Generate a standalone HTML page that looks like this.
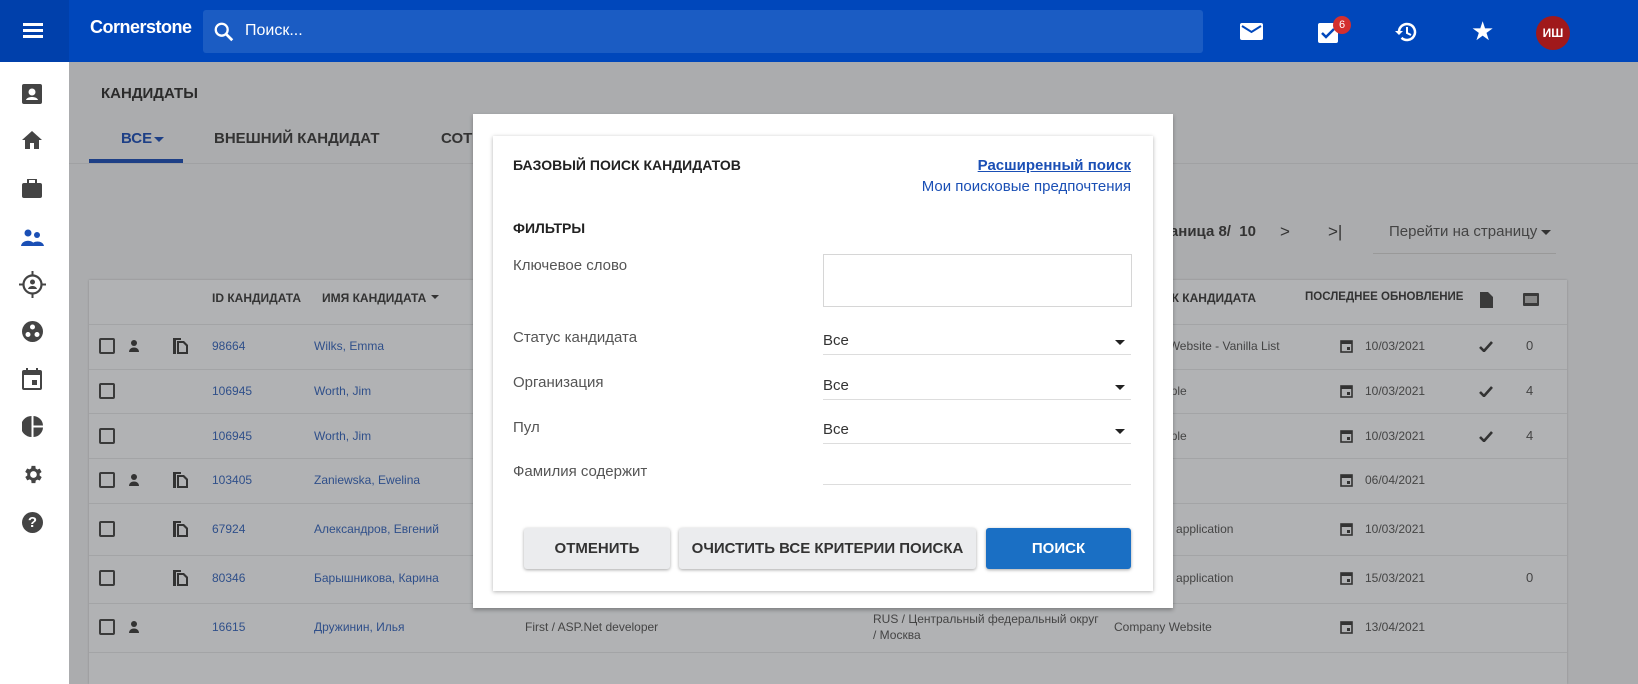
<!DOCTYPE html>
<html><head><meta charset="utf-8"><style>
*{margin:0;padding:0;box-sizing:border-box}
body{width:1638px;height:684px;overflow:hidden;position:relative;font-family:"Liberation Sans",sans-serif;background:#abacae;color:#333}
.a{position:absolute}
.hdr{left:0;top:0;width:1638px;height:62px;background:#0047bb}
.side{left:0;top:62px;width:69px;height:622px;background:#fff}
.t{position:absolute;white-space:nowrap}
.lk{color:#2f4f8a}
.row{position:absolute;left:89px;width:1478px;border-top:1px solid #a3a4a6}
.cb{position:absolute;left:99px;width:16px;height:16px;border:2px solid #3a3a3a;border-radius:2px}
.f13{font-size:12px}
.lbl{font-size:15px;color:#555}
.sel{position:absolute;left:823px;width:308px;border-bottom:1px solid #ddd;height:26px;font-size:15px;color:#333}
.sel:after{content:"";position:absolute;right:6px;top:11px;border:5px solid transparent;border-top:5px solid #222}
.btn{position:absolute;top:528px;height:41px;border-radius:3px;font-size:15px;font-weight:bold;text-align:center;line-height:41px;box-shadow:0 1px 3px rgba(0,0,0,.35)}
</style></head><body>
<div class="a hdr"></div>
<div class="a" style="left:0;top:0;width:69px;height:62px;background:#0040ab"></div>
<div class="a" style="left:23px;top:23px;width:20px;height:3px;background:#fff;box-shadow:0 6px 0 #fff,0 12px 0 #fff"></div>
<div class="t" style="left:90px;top:17px;color:#fff;font-weight:bold;font-size:18px;letter-spacing:-0.5px">Cornerstone</div>
<div class="a" style="left:203px;top:10px;width:1000px;height:43px;background:#1b5cc3;border-radius:3px"></div>
<svg class="a" style="left:213px;top:21px" width="22" height="22" viewBox="0 0 24 24"><circle cx="9.5" cy="9.5" r="6.5" fill="none" stroke="#fff" stroke-width="2.5"/><path d="M14 14l7 7" stroke="#fff" stroke-width="3"/></svg>
<div class="t" style="left:245px;top:22px;color:#fff;font-size:16px">Поиск...</div>
<svg class="a" style="left:1240px;top:23px" width="23" height="17" viewBox="0 0 23 17"><rect width="23" height="17" rx="2" fill="#fff"/><path d="M2 3l9.5 6L21 3" stroke="#0047bb" stroke-width="2" fill="none"/></svg>
<svg class="a" style="left:1318px;top:20px" width="22" height="23" viewBox="0 0 22 23"><rect y="3" width="20" height="20" rx="2" fill="#fff"/><path d="M4 13l4 4 8-8" stroke="#0047bb" stroke-width="2.5" fill="none"/></svg>
<div class="a" style="left:1333px;top:16px;width:18px;height:18px;border-radius:50%;background:#d32f2f;color:#fff;font-size:11px;text-align:center;line-height:18px">6</div>
<svg class="a" style="left:1394px;top:21px" width="24" height="22" viewBox="0 0 24 22"><path d="M5 11a8 8 0 1 1 2.5 5.8" stroke="#fff" stroke-width="2.5" fill="none"/><path d="M1 10l4 4 4-4z" fill="#fff"/><path d="M13 6v6l4 2" stroke="#fff" stroke-width="2" fill="none"/></svg>
<div class="t" style="left:1471px;top:16px;color:#fff;font-size:26px">★</div>
<div class="a" style="left:1536px;top:16px;width:34px;height:34px;border-radius:50%;background:#a0191b;color:#fff;font-size:12px;font-weight:bold;text-align:center;line-height:34px">ИШ</div>
<div class="a side"></div>
<svg class="a" style="left:22px;top:84px" width="20" height="20"><rect width="20" height="20" rx="2" fill="#444"/><circle cx="10" cy="8" r="3.5" fill="#fff"/><path d="M4 16c1-4 11-4 12 0z" fill="#fff"/></svg>
<svg class="a" style="left:22px;top:131px" width="20" height="18"><path d="M10 0L0 9h3v9h5v-6h4v6h5V9h3z" fill="#444"/></svg>
<svg class="a" style="left:22px;top:179px" width="20" height="19"><rect y="4" width="20" height="15" rx="2" fill="#444"/><rect x="6" y="0" width="8" height="6" rx="1" fill="none" stroke="#444" stroke-width="2"/></svg>
<svg class="a" style="left:21px;top:229px" width="23" height="17"><circle cx="7" cy="4" r="3.5" fill="#1a4fb5"/><circle cx="16" cy="6" r="3" fill="#1a4fb5"/><path d="M0 17c1-7 13-7 14 0z M10 17c1-6 12-6 13 0z" fill="#1a4fb5"/></svg>
<svg class="a" style="left:19px;top:271px" width="27" height="27"><circle cx="13.5" cy="13.5" r="9" fill="none" stroke="#444" stroke-width="2.2"/><path d="M13.5 0v5M13.5 22v5M0 13.5h5M22 13.5h5" stroke="#444" stroke-width="2"/><circle cx="13.5" cy="11" r="2.5" fill="#444"/><path d="M9 18c1-4 8-4 9 0z" fill="#444"/></svg>
<svg class="a" style="left:22px;top:321px" width="21" height="21"><circle cx="10.5" cy="10.5" r="10.5" fill="#444"/><circle cx="10.5" cy="6" r="2.5" fill="#fff"/><circle cx="6" cy="13.5" r="2.5" fill="#fff"/><circle cx="15" cy="13.5" r="2.5" fill="#fff"/></svg>
<svg class="a" style="left:22px;top:368px" width="20" height="22"><rect x="1" y="3" width="18" height="18" rx="1" fill="none" stroke="#444" stroke-width="2"/><rect x="1" y="3" width="18" height="4" fill="#444"/><path d="M5 0v4M15 0v4" stroke="#444" stroke-width="2"/><rect x="10" y="12" width="5" height="5" fill="#444"/></svg>
<svg class="a" style="left:22px;top:416px" width="21" height="21"><path d="M9.5 0v21A10.5 10.5 0 0 1 9.5 0z M11.5 0A10 10 0 0 1 21 9.5h-9.5z M11.5 11.5H21A10 10 0 0 1 11.5 21z" fill="#444"/></svg>
<svg class="a" style="left:21px;top:463px" width="23" height="23" viewBox="0 0 24 24"><path fill="#444" d="M19.4 13a7.5 7.5 0 0 0 0-2l2.1-1.6-2-3.5-2.5 1a7 7 0 0 0-1.7-1L15 3h-4l-.4 2.7a7 7 0 0 0-1.7 1l-2.5-1-2 3.5L6.6 11a7.5 7.5 0 0 0 0 2l-2.1 1.6 2 3.5 2.5-1a7 7 0 0 0 1.700 1L11 21h4l.4-2.7a7 7 0 0 0 1.7-1l2.5 1 2-3.5zM13 15.5a3.5 3.5 0 1 1 0-7 3.5 3.5 0 0 1 0 7z"/></svg>
<div class="a" style="left:22px;top:512px;width:21px;height:21px;border-radius:50%;background:#444;color:#fff;font-weight:bold;font-size:15px;text-align:center;line-height:21px">?</div>
<div class="t" style="left:101px;top:85px;font-size:15px;font-weight:bold;color:#2b2b2b">КАНДИДАТЫ</div>
<div class="t" style="left:121px;top:130px;font-size:15px;font-weight:bold;color:#1d3f86">ВСЕ</div>
<div class="a" style="left:154px;top:137px;border:5px solid transparent;border-top:5px solid #1d3f86"></div>
<div class="a" style="left:89px;top:159px;width:94px;height:4px;background:#1d3f86"></div>
<div class="t" style="left:214px;top:130px;font-size:15px;font-weight:bold;color:#333">ВНЕШНИЙ КАНДИДАТ</div>
<div class="t" style="left:441px;top:130px;font-size:15px;font-weight:bold;color:#333">СОТРУДНИК</div>
<div class="a" style="left:69px;top:163px;width:1569px;height:1px;background:#a0a1a3"></div>
<div class="t" style="right:382px;top:223px;font-size:15px;font-weight:bold;color:#333">Страница 8/&nbsp; 10</div>
<div class="t" style="left:1280px;top:222px;font-size:17px;color:#333">&gt;</div>
<div class="t" style="left:1328px;top:222px;font-size:17px;color:#333">&gt;|</div>
<div class="t" style="left:1389px;top:223px;font-size:15px;color:#444">Перейти на страницу</div>
<div class="a" style="left:1541px;top:230px;border:5px solid transparent;border-top:5px solid #333"></div>
<div class="a" style="left:1373px;top:253px;width:183px;height:1px;background:#999"></div>
<div class="a" style="left:89px;top:280px;width:1478px;height:404px;background:#b1b2b4;box-shadow:0 0 2px rgba(0,0,0,.2)"></div>
<div class="t f13" style="left:212px;top:291px;font-weight:bold;color:#333">ID КАНДИДАТА</div>
<div class="t f13" style="left:322px;top:291px;font-weight:bold;color:#333">ИМЯ КАНДИДАТА</div>
<div class="a" style="left:431px;top:295px;border:4px solid transparent;border-top:4px solid #333"></div>
<div class="t f13" style="right:382px;top:291px;font-weight:bold;color:#333">ИСТОЧНИК КАНДИДАТА</div>
<div class="t f13" style="left:1305px;top:291px;font-weight:bold;color:#333;font-size:11.5px">ПОСЛЕДНЕЕ ОБНОВЛЕНИЕ</div>
<svg class="a" style="left:1480px;top:292px" width="13" height="16"><path d="M0 0h8l5 5v11H0z" fill="#3a3a3a"/></svg>
<svg class="a" style="left:1523px;top:293px" width="16" height="13"><rect width="16" height="13" rx="1" fill="#3a3a3a"/><rect x="2" y="3" width="12" height="7" fill="#888"/></svg>
<div class="row" style="top:324px;height:45px"></div>
<div class="row" style="top:369px"></div>
<div class="row" style="top:413px"></div>
<div class="row" style="top:458px"></div>
<div class="row" style="top:503px"></div>
<div class="row" style="top:555px"></div>
<div class="row" style="top:603px"></div>
<div class="row" style="top:652px"></div>
<div class="cb" style="top:338px"></div><div class="cb" style="top:383px"></div><div class="cb" style="top:428px"></div><div class="cb" style="top:472px"></div><div class="cb" style="top:521px"></div><div class="cb" style="top:570px"></div><div class="cb" style="top:619px"></div>
<svg class="a" style="left:129px;top:340px" width="10" height="12"><circle cx="5" cy="3" r="3" fill="#333"/><path d="M0 12c0-6 10-6 10 0z" fill="#333"/></svg>
<svg class="a" style="left:129px;top:474px" width="10" height="12"><circle cx="5" cy="3" r="3" fill="#333"/><path d="M0 12c0-6 10-6 10 0z" fill="#333"/></svg>
<svg class="a" style="left:129px;top:621px" width="10" height="12"><circle cx="5" cy="3" r="3" fill="#333"/><path d="M0 12c0-6 10-6 10 0z" fill="#333"/></svg>
<svg class="a" style="left:173px;top:338px" width="15" height="16"><path d="M0 0h8v2H3v14H0z M4 3h7l4 4v9H4z" fill="#333"/><path d="M6 5h4l3 3v6H6z" fill="#b1b2b4"/></svg>
<svg class="a" style="left:173px;top:472px" width="15" height="16"><path d="M0 0h8v2H3v14H0z M4 3h7l4 4v9H4z" fill="#333"/><path d="M6 5h4l3 3v6H6z" fill="#b1b2b4"/></svg>
<svg class="a" style="left:173px;top:521px" width="15" height="16"><path d="M0 0h8v2H3v14H0z M4 3h7l4 4v9H4z" fill="#333"/><path d="M6 5h4l3 3v6H6z" fill="#b1b2b4"/></svg>
<svg class="a" style="left:173px;top:570px" width="15" height="16"><path d="M0 0h8v2H3v14H0z M4 3h7l4 4v9H4z" fill="#333"/><path d="M6 5h4l3 3v6H6z" fill="#b1b2b4"/></svg>
<div class="t f13 lk" style="left:212px;top:339px">98664</div><div class="t f13 lk" style="left:314px;top:339px">Wilks, Emma</div>
<div class="t f13 lk" style="left:212px;top:384px">106945</div><div class="t f13 lk" style="left:314px;top:384px">Worth, Jim</div>
<div class="t f13 lk" style="left:212px;top:429px">106945</div><div class="t f13 lk" style="left:314px;top:429px">Worth, Jim</div>
<div class="t f13 lk" style="left:212px;top:473px">103405</div><div class="t f13 lk" style="left:314px;top:473px">Zaniewska, Ewelina</div>
<div class="t f13 lk" style="left:212px;top:522px">67924</div><div class="t f13 lk" style="left:314px;top:522px">Александров, Евгений</div>
<div class="t f13 lk" style="left:212px;top:571px">80346</div><div class="t f13 lk" style="left:314px;top:571px">Барышникова, Карина</div>
<div class="t f13 lk" style="left:212px;top:620px">16615</div><div class="t f13 lk" style="left:314px;top:620px">Дружинин, Илья</div>
<div class="t f13" style="left:525px;top:620px;color:#444">First / ASP.Net developer</div>
<div class="t f13" style="left:873px;top:611px;color:#444;line-height:16px">RUS / Центральный федеральный округ<br>/ Москва</div>
<div class="t f13" style="left:1114px;top:620px;color:#444">Company Website</div>
<div class="t f13" style="left:1114px;top:339px;color:#444">Company Website - Vanilla List</div>
<div class="t f13" style="left:1114px;top:384px;color:#444">Talent People</div>
<div class="t f13" style="left:1114px;top:429px;color:#444">Talent People</div>
<div class="t f13" style="left:1114px;top:522px;color:#444">Homepage application</div>
<div class="t f13" style="left:1114px;top:571px;color:#444">Homepage application</div>
<div class="t f13" style="left:1365px;top:339px;color:#444">10/03/2021</div>
<div class="t f13" style="left:1365px;top:384px;color:#444">10/03/2021</div>
<div class="t f13" style="left:1365px;top:429px;color:#444">10/03/2021</div>
<div class="t f13" style="left:1365px;top:473px;color:#444">06/04/2021</div>
<div class="t f13" style="left:1365px;top:522px;color:#444">10/03/2021</div>
<div class="t f13" style="left:1365px;top:571px;color:#444">15/03/2021</div>
<div class="t f13" style="left:1365px;top:620px;color:#444">13/04/2021</div>
<svg class="a" style="left:1340px;top:339px" width="13" height="14"><rect x="1" y="2" width="11" height="11" fill="none" stroke="#333" stroke-width="1.6"/><rect x="1" y="2" width="11" height="3" fill="#333"/><rect x="7" y="8" width="3" height="3" fill="#333"/></svg>
<svg class="a" style="left:1340px;top:384px" width="13" height="14"><rect x="1" y="2" width="11" height="11" fill="none" stroke="#333" stroke-width="1.6"/><rect x="1" y="2" width="11" height="3" fill="#333"/><rect x="7" y="8" width="3" height="3" fill="#333"/></svg>
<svg class="a" style="left:1340px;top:429px" width="13" height="14"><rect x="1" y="2" width="11" height="11" fill="none" stroke="#333" stroke-width="1.6"/><rect x="1" y="2" width="11" height="3" fill="#333"/><rect x="7" y="8" width="3" height="3" fill="#333"/></svg>
<svg class="a" style="left:1340px;top:473px" width="13" height="14"><rect x="1" y="2" width="11" height="11" fill="none" stroke="#333" stroke-width="1.6"/><rect x="1" y="2" width="11" height="3" fill="#333"/><rect x="7" y="8" width="3" height="3" fill="#333"/></svg>
<svg class="a" style="left:1340px;top:522px" width="13" height="14"><rect x="1" y="2" width="11" height="11" fill="none" stroke="#333" stroke-width="1.6"/><rect x="1" y="2" width="11" height="3" fill="#333"/><rect x="7" y="8" width="3" height="3" fill="#333"/></svg>
<svg class="a" style="left:1340px;top:571px" width="13" height="14"><rect x="1" y="2" width="11" height="11" fill="none" stroke="#333" stroke-width="1.6"/><rect x="1" y="2" width="11" height="3" fill="#333"/><rect x="7" y="8" width="3" height="3" fill="#333"/></svg>
<svg class="a" style="left:1340px;top:620px" width="13" height="14"><rect x="1" y="2" width="11" height="11" fill="none" stroke="#333" stroke-width="1.6"/><rect x="1" y="2" width="11" height="3" fill="#333"/><rect x="7" y="8" width="3" height="3" fill="#333"/></svg>
<svg class="a" style="left:1479px;top:341px" width="14" height="11"><path d="M1 6l4 4 8-9" stroke="#333" stroke-width="2.6" fill="none"/></svg>
<svg class="a" style="left:1479px;top:386px" width="14" height="11"><path d="M1 6l4 4 8-9" stroke="#333" stroke-width="2.6" fill="none"/></svg>
<svg class="a" style="left:1479px;top:431px" width="14" height="11"><path d="M1 6l4 4 8-9" stroke="#333" stroke-width="2.6" fill="none"/></svg>
<div class="t" style="left:1526px;top:338px;font-size:13px;color:#444">0</div>
<div class="t" style="left:1526px;top:383px;font-size:13px;color:#444">4</div>
<div class="t" style="left:1526px;top:428px;font-size:13px;color:#444">4</div>
<div class="t" style="left:1526px;top:570px;font-size:13px;color:#444">0</div>
<div class="a" style="left:473px;top:114px;width:700px;height:494px;background:#fff;box-shadow:0 2px 4px rgba(0,0,0,.3)"></div>
<div class="a" style="left:493px;top:136px;width:660px;height:455px;background:#fff;box-shadow:0 1px 4px rgba(0,0,0,.3)"></div>
<div class="t" style="left:513px;top:157px;font-size:14px;font-weight:bold;color:#222">БАЗОВЫЙ ПОИСК КАНДИДАТОВ</div>
<div class="t" style="right:507px;top:157px;font-size:15px;font-weight:bold;color:#1a4fb5;text-decoration:underline">Расширенный поиск</div>
<div class="t" style="right:507px;top:178px;font-size:15px;color:#1a4fb5">Мои поисковые предпочтения</div>
<div class="t" style="left:513px;top:220px;font-size:14px;font-weight:bold;color:#222">ФИЛЬТРЫ</div>
<div class="t lbl" style="left:513px;top:257px">Ключевое слово</div>
<div class="a" style="left:823px;top:254px;width:309px;height:53px;border:1px solid #d6d6d6"></div>
<div class="t lbl" style="left:513px;top:329px">Статус кандидата</div>
<div class="t lbl" style="left:513px;top:374px">Организация</div>
<div class="t lbl" style="left:513px;top:419px">Пул</div>
<div class="t lbl" style="left:513px;top:463px">Фамилия содержит</div>
<div class="sel" style="top:329px;padding-top:3px">Все</div>
<div class="sel" style="top:374px;padding-top:3px">Все</div>
<div class="sel" style="top:418px;padding-top:3px">Все</div>
<div class="a" style="left:823px;top:484px;width:308px;height:1px;background:#ddd"></div>
<div class="btn" style="left:524px;width:146px;background:#ebecee;color:#333">ОТМЕНИТЬ</div>
<div class="btn" style="left:679px;width:297px;background:#ebecee;color:#333">ОЧИСТИТЬ ВСЕ КРИТЕРИИ ПОИСКА</div>
<div class="btn" style="left:986px;width:145px;background:#1a6fc4;color:#fff">ПОИСК</div>
</body></html>
